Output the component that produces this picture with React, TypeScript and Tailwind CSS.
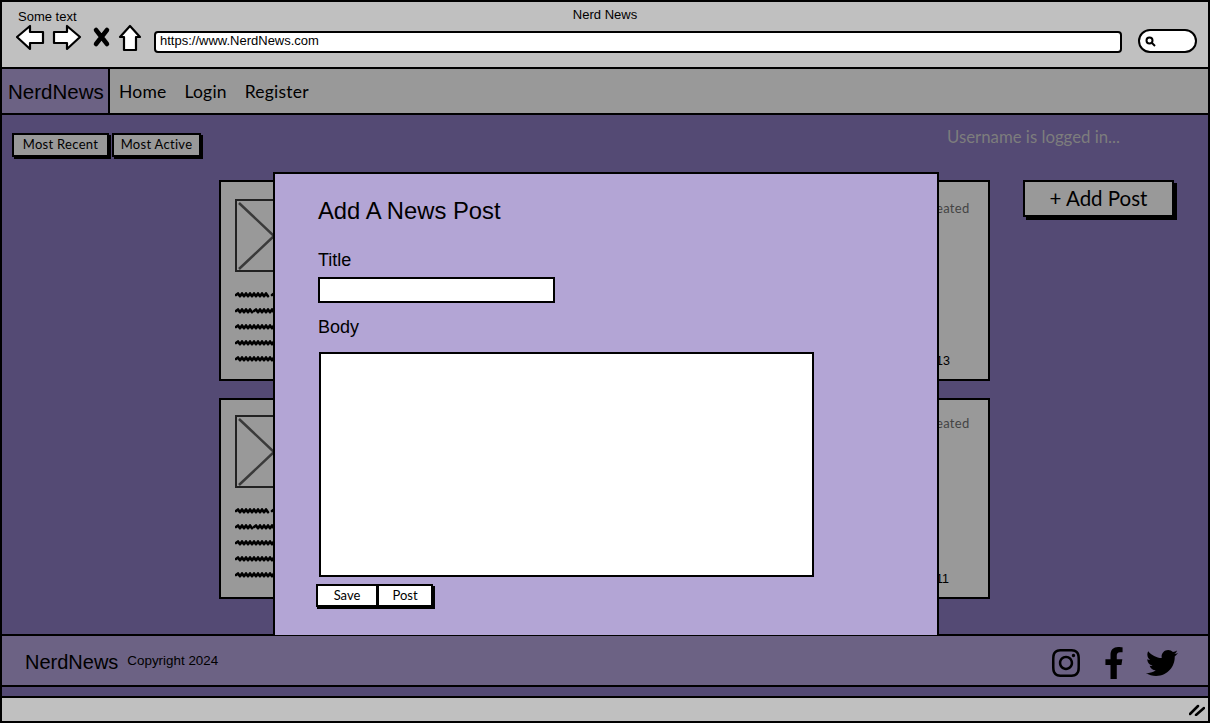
import { FaFacebookF, FaInstagram, FaTwitter } from "react-icons/fa";

const sketchFont = "font-['Liberation_Sans',Arial,sans-serif]";
const roundFont = "font-['Lato','Liberation_Sans',sans-serif]";

// scribbled placeholder text, each line is a list of [from, to] runs
const scribbleLines = [
  [[1, 33], [37, 40]],
  [[1, 15], [19, 40]],
  [[1, 40]],
  [[1, 40]],
  [[1, 40]],
];

function wave(from: number, to: number, y: number) {
  let d = `M${from} ${y}`;
  for (let x = from; x < to; x += 4) {
    d += ` L${x + 2} ${y - 1.6} L${x + 4} ${y + 1.2}`;
  }
  return d;
}

function Squiggles() {
  return (
    <svg width="40" height="71" viewBox="0 0 40 71" aria-hidden="true">
      {scribbleLines.map((runs, i) =>
        runs.map(([from, to], j) => (
          <path
            key={`${i}-${j}`}
            d={wave(from, to, 4 + i * 16)}
            fill="none"
            stroke="#000"
            strokeWidth={2.6}
            strokeLinecap="round"
            strokeLinejoin="round"
          />
        ))
      )}
    </svg>
  );
}

function NewsCard({
  stamp,
  imageTop,
  createdTop,
  stampBottom,
}: {
  stamp: string;
  imageTop: string;
  createdTop: string;
  stampBottom: string;
}) {
  return (
    <div className="h-[201px] w-[771px] border-2 border-black bg-[#999999] flex justify-between">
      <div className={`pl-[14px] flex flex-col ${imageTop}`}>
        <svg width="40" height="74" viewBox="0 0 40 74" className="w-[40px] h-[74px] overflow-visible" aria-hidden="true">
          <rect x="1" y="1" width="60" height="71" fill="none" stroke="#222" strokeWidth="2" />
          <path d="M4 4 L39 37 L4 70" fill="none" stroke="#3a3a3a" strokeWidth="2.5" />
        </svg>
        <div className="mt-[18px]">
          <Squiggles />
        </div>
      </div>
      <div className={`flex flex-col justify-between items-start w-[52px] ${sketchFont}`}>
        <span className={`text-[13px] text-[#444] tracking-[0.3px] leading-none ${createdTop} ${roundFont}`}>eated</span>
        <span className={`text-[12.5px] text-black leading-none ${stampBottom}`}>{stamp}</span>
      </div>
    </div>
  );
}

export default function App() {
  return (
    <div className={`w-[1210px] h-[724px] overflow-hidden bg-white flex flex-col ${sketchFont}`}>
      <div className="h-[723px] border-2 border-b-0 border-black flex flex-col bg-[#544a74]">
        {/* browser bar */}
        <div className="h-[67px] shrink-0 bg-[#c0c0c0] border-b-2 border-black relative flex items-start">
          <div className="pl-[14px] pt-[7px] w-[152px] shrink-0">
            <p className="text-[13px] leading-[15px] pl-[2px] text-black">Some text</p>
            <div className="flex items-center mt-[-1px]">
              <svg width="128" height="30" viewBox="0 0 128 30" aria-hidden="true">
                <path d="M1 14 L14 3 L14 9 L27 9 L27 20 L14 20 L14 26 Z" fill="#fff" stroke="#000" strokeWidth="2.2" strokeLinejoin="round" />
                <path d="M64 14 L51 3 L51 9 L38 9 L38 20 L51 20 L51 26 Z" fill="#fff" stroke="#000" strokeWidth="2.2" strokeLinejoin="round" />
                <path d="M80 7 L91 21 M91 7 L80 21" stroke="#000" strokeWidth="4.5" strokeLinecap="round" />
                <path d="M114 3 L124 14 L120 14 L120 27 L108 27 L108 14 L104 14 Z" fill="#fff" stroke="#000" strokeWidth="2.2" strokeLinejoin="round" />
              </svg>
            </div>
          </div>
          <p className="absolute left-0 right-0 top-[5px] text-center text-[13px] leading-[15px] text-black">Nerd News</p>
          <div className="mt-[29px] h-[22px] w-[968px] shrink-0 bg-white border-2 border-black rounded-[4px] text-[13px] leading-[16px] pl-[4px] text-black">
            https://www.NerdNews.com
          </div>
          <div className="ml-[16px] mt-[27px] h-[24px] w-[59px] bg-white border-2 border-black rounded-full flex items-center pl-[5px]">
            <svg width="11" height="11" viewBox="0 0 11 11" aria-hidden="true">
              <circle cx="4.5" cy="4.5" r="3" fill="none" stroke="#000" strokeWidth="2" />
              <path d="M7 7 L10 10" stroke="#000" strokeWidth="2" />
            </svg>
          </div>
        </div>

        {/* nav */}
        <nav className="h-[46px] shrink-0 bg-[#999999] border-b-2 border-black flex items-stretch">
          <div className="w-[108px] bg-[#6c6284] border-r-2 border-black flex items-center pl-[6px] text-[20.5px] text-black pt-[3px]">
            NerdNews
          </div>
          <div className={`flex items-center gap-[18px] pl-[9px] pt-[2px] text-[17.5px] tracking-[0.2px] text-black ${roundFont}`}>
            <span>Home</span>
            <span>Login</span>
            <span>Register</span>
          </div>
        </nav>

        {/* main */}
        <main className="h-[521px] shrink-0 relative border-b-2 border-black">
          <div className="flex justify-between pl-[10px] pr-[88px] pt-[18px]">
            <div className={`flex gap-[3px] text-[13px] tracking-[0.3px] text-black ${roundFont}`}>
              <button className="h-[24px] w-[97px] bg-[#999999] border-2 border-black shadow-[2px_2px_0_#000]">Most Recent</button>
              <button className="h-[24px] w-[89px] bg-[#999999] border-2 border-black shadow-[2px_2px_0_#000]">Most Active</button>
            </div>
            <p className={`text-[16.8px] leading-[22px] mt-[-7px] text-[#7d7d7d] ${roundFont}`}>Username is logged in...</p>
          </div>
          <div className="flex pl-[217px] pt-[23px]">
            <div className="flex flex-col gap-[17px]">
              <NewsCard stamp="13" imageTop="pt-[17px]" createdTop="mt-[20px]" stampBottom="mb-[12px]" />
              <NewsCard stamp="11" imageTop="pt-[15px]" createdTop="mt-[17px]" stampBottom="mb-[12px]" />
            </div>
            <button className={`ml-[33px] h-[37px] w-[151px] bg-[#999999] border-2 border-black shadow-[3px_3px_0_#000] text-[20.5px] text-black ${roundFont}`}>
              + Add Post
            </button>
          </div>

          {/* modal */}
          <div className="absolute left-[271px] top-[57px] w-[666px] h-[463px] bg-[#b3a5d5] border-2 border-b-0 border-black pl-[43px] pt-[23px] text-black">
            <h2 className="text-[23.8px] leading-[27px]">Add A News Post</h2>
            <label className="block mt-[26px] text-[18px] leading-[20px]">Title</label>
            <div className="mt-[7px] h-[26px] w-[237px] bg-white border-2 border-black" />
            <label className="block mt-[14px] text-[18px] leading-[20px]">Body</label>
            <div className="mt-[15px] h-[225px] w-[495px] ml-[1px] bg-white border-2 border-black" />
            <div className={`flex mt-[7px] ml-[-2px] text-[13px] ${roundFont}`}>
              <button className="h-[23px] w-[62px] bg-white border-2 border-black shadow-[1px_2px_0_#000]">Save</button>
              <button className="h-[23px] w-[56px] ml-[-1px] bg-white border-2 border-black shadow-[2px_2px_0_#000]">Post</button>
            </div>
          </div>
        </main>

        {/* footer */}
        <footer className="h-[51px] shrink-0 bg-[#6c6284] border-b-2 border-black flex items-center justify-between pl-[23px] pr-[30px]">
          <div className="flex items-center gap-[9px] text-black pt-[2px]">
            <span className="text-[20px]">NerdNews</span>
            <span className="text-[13.4px]">Copyright 2024</span>
          </div>
          <div className="flex items-center text-black pt-[5px]">
            <FaInstagram className="w-[32px] h-[32px]" />
            <FaFacebookF className="w-[30px] h-[32px] ml-[17px]" />
            <FaTwitter className="w-[32px] h-[32px] ml-[17px]" />
          </div>
        </footer>
        <div className="h-[9px] shrink-0" />

        {/* status bar */}
        <div className="h-[27px] shrink-0 bg-[#c0c0c0] border-y-2 border-black flex items-center justify-end pr-[3px]">
          <svg width="16" height="12" viewBox="0 0 16 12" aria-hidden="true">
            <path d="M1 10 L9 2 M7 11 L15 4" stroke="#000" strokeWidth="2.5" strokeLinecap="round" />
          </svg>
        </div>
      </div>
    </div>
  );
}
